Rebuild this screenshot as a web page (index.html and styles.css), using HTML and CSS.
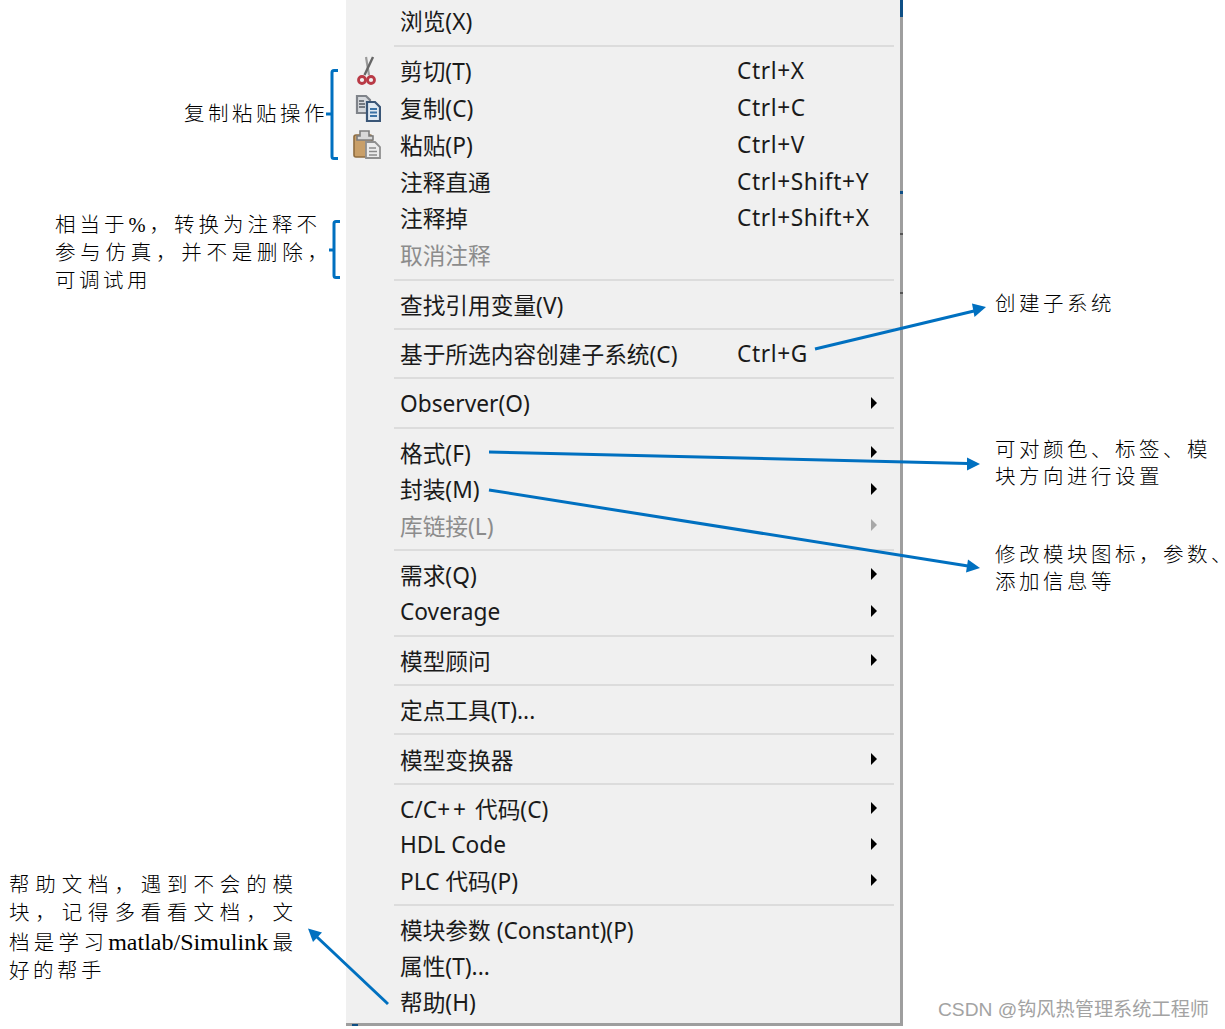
FILE: index.html
```html
<!DOCTYPE html>
<html lang="zh-CN">
<head>
<meta charset="utf-8">
<title>Simulink 右键菜单</title>
<link rel="stylesheet" href="styles.css">
</head>
<body>
<div class="page">
  <div class="menu">
    <div class="row tall"><span class="label">浏览(X)</span></div>
    <div class="sep"></div>
    <div class="row tall">
      <svg class="icon" viewBox="0 0 28 30"><path d="M13 1L16 19" stroke="#9a9a9a" stroke-width="2.200" fill="none"/><path d="M20 1L11.500 19" stroke="#666" stroke-width="2.400" fill="none"/><circle cx="9" cy="24" r="3.500" fill="none" stroke="#b93a46" stroke-width="2.800"/><circle cx="18" cy="24" r="3.500" fill="none" stroke="#b93a46" stroke-width="2.800"/></svg>
      <span class="label">剪切(T)</span><span class="key">Ctrl+X</span>
    </div>
    <div class="row tall">
      <svg class="icon" viewBox="0 0 28 30"><path d="M4 4h9l4 4v13H4z" fill="#d6d9dd" stroke="#7f8389" stroke-width="2.200"/><path d="M6 9h5M6 12h6M6 15h6" stroke="#555b63" stroke-width="1.600"/><path d="M14 10h8l5 5v14H14z" fill="#dfe9f2" stroke="#3a5677" stroke-width="2.200"/><path d="M17 17h7M17 20.500h7M17 24h7" stroke="#3a72a6" stroke-width="1.800"/></svg>
      <span class="label">复制(C)</span><span class="key">Ctrl+C</span>
    </div>
    <div class="row tall">
      <svg class="icon" viewBox="0 0 28 30"><rect x="1" y="6" width="18" height="22" rx="2" fill="#c99f68" stroke="#8f6c3f" stroke-width="1.600"/><path d="M7 7V2h9v5h4v4H4V7z" fill="#d8d8d8" stroke="#7d7d7d" stroke-width="1.600"/><path d="M13 13h9l5 5v11H13z" fill="#ececec" stroke="#8f8f8f" stroke-width="1.800"/><path d="M16 19h7M16 22.500h8M16 26h8" stroke="#8a8a8a" stroke-width="1.500"/></svg>
      <span class="label">粘贴(P)</span><span class="key">Ctrl+V</span>
    </div>
    <div class="row tall"><span class="label">注释直通</span><span class="key">Ctrl+Shift+Y</span></div>
    <div class="row tall"><span class="label">注释掉</span><span class="key">Ctrl+Shift+X</span></div>
    <div class="row tall off"><span class="label">取消注释</span></div>
    <div class="sep"></div>
    <div class="row"><span class="label">查找引用变量(V)</span></div>
    <div class="sep"></div>
    <div class="row"><span class="label">基于所选内容创建子系统(C)</span><span class="key">Ctrl+G</span></div>
    <div class="sep"></div>
    <div class="row sub"><span class="label">Observer(O)</span></div>
    <div class="sep"></div>
    <div class="row sub"><span class="label">格式(F)</span></div>
    <div class="row sub"><span class="label">封装(M)</span></div>
    <div class="row sub off"><span class="label">库链接(L)</span></div>
    <div class="sep"></div>
    <div class="row sub"><span class="label">需求(Q)</span></div>
    <div class="row sub"><span class="label">Coverage</span></div>
    <div class="sep"></div>
    <div class="row sub"><span class="label">模型顾问</span></div>
    <div class="sep"></div>
    <div class="row"><span class="label">定点工具(T)...</span></div>
    <div class="sep"></div>
    <div class="row sub"><span class="label">模型变换器</span></div>
    <div class="sep"></div>
    <div class="row low sub"><span class="label">C/C<span class="wide">++</span> 代码(C)</span></div>
    <div class="row low sub"><span class="label">HDL Code</span></div>
    <div class="row low sub"><span class="label">PLC 代码(P)</span></div>
    <div class="sep"></div>
    <div class="row low"><span class="label">模块参数 (Constant)(P)</span></div>
    <div class="row low"><span class="label">属性(T)...</span></div>
    <div class="row low"><span class="label">帮助(H)</span></div>
  </div>

  <svg class="overlay" viewBox="0 0 1225 1029">
    <g class="edge">
      <rect class="blue" x="900" y="0" width="3" height="17"/>
      <rect class="blue" x="900" y="191" width="3" height="3"/>
      <rect class="grey" x="900" y="233" width="3" height="2"/>
      <rect class="grey" x="900" y="292" width="3" height="2"/>
      <rect class="blue" x="352" y="1024" width="6" height="2"/>
    </g>
    <g class="brace">
      <path d="M338 70.500H334Q332 70.500 332 72.500V156.500Q332 158.500 334 158.500H338M332 114H326"/>
      <path d="M340 221.500H336Q334 221.500 334 223.500V275.500Q334 277.500 336 277.500H340M334 250H329"/>
    </g>
    <g class="arrow">
      <path d="M815 349L974 311"/><path class="head" d="M986 307L972 303.500L974.500 317z"/>
      <path d="M489 452L968 463.500"/><path class="head" d="M980 464L967 457.500V470.500z"/>
      <path d="M489 490L968 566"/><path class="head" d="M980 568L968 559.500L966 572.500z"/>
      <path d="M388 1004L317 937"/><path class="head" d="M308 928.500L313 942L322 932.500z"/>
    </g>
  </svg>

  <p class="note n1">复制粘贴操作</p>
  <p class="note n2"><span class="line w1">相当于%，转换为注释不</span><span class="line w2">参与仿真，并不是删除，</span>可调试用</p>
  <p class="note n3">创建子系统</p>
  <p class="note n4">可对颜色、标签、模<br>块方向进行设置</p>
  <p class="note n5">修改模块图标，参数<span class="tail">、</span><br>添加信息等</p>
  <p class="note n6"><span class="line w3">帮助文档，遇到不会的模</span><span class="line w3">块，记得多看看文档，文</span><span class="line w3">档是学习<span class="latin">matlab/Simulink</span>最</span>好的帮手</p>
  <p class="mark">CSDN @钩风热管理系统工程师</p>
</div>
</body>
</html>
```
FILE: styles.css
```css
* { box-sizing: border-box; }
html, body { margin: 0; background: #fff; }
.page { position: relative; width: 1225px; height: 1029px; overflow: hidden; padding-left: 346px; }
.menu {
  width: 557px; height: 1026px; padding-top: 2.500px;
  background: #f0f0f0;
  border-right: 3px solid #9e9e9e; border-bottom: 3px solid #9e9e9e;
  display: flex; flex-direction: column;
  font-family: "Noto Sans", "Noto Sans CJK SC", sans-serif;
  font-size: 22.700px; color: #1a1a1a;
}
.row { position: relative; height: 36.400px; flex: none; display: flex; align-items: center; padding-left: 54px; }
.row.tall { height: 36.800px; }
.row.low { height: 36px; }
.label { width: 337px; flex: none; white-space: nowrap; }
.key { white-space: nowrap; letter-spacing: 0.600px; }
.wide { letter-spacing: 3px; }
.off { color: #8c8c8c; }
.icon { position: absolute; left: 7px; top: 50%; transform: translateY(-50%); width: 28px; height: 30px; }
.sub::after {
  content: ""; position: absolute; left: 525px; top: 12px;
  border-left: 6px solid #000; border-top: 6px solid transparent; border-bottom: 6px solid transparent;
}
.sub.off::after { border-left-color: #a8a8a8; }
.sep { height: 2px; flex: none; margin: 5.500px 6px 5.500px 48px; background: #dcdcdc; }
.overlay { position: absolute; left: 0; top: 0; width: 1225px; height: 1029px; pointer-events: none; }
.edge .blue { fill: #0f4f85; }
.edge .grey { fill: #555; }
.brace path { fill: none; stroke: #0070c0; stroke-width: 3; }
.arrow path { fill: none; stroke: #0070c0; stroke-width: 3; }
.arrow path.head { fill: #0070c0; stroke: none; }
.note {
  position: absolute; margin: 0; white-space: nowrap;
  font-family: "Liberation Serif", "Noto Sans CJK SC", serif;
  font-size: 20.500px; line-height: 28px; color: #000; letter-spacing: 3.500px; font-weight: 300;
}
.line { display: block; text-align: justify; text-align-last: justify; letter-spacing: 0; }
.w1 { width: 262px; }
.w2 { width: 273px; }
.w3 { width: 284px; }
.tail { font-feature-settings: "halt"; letter-spacing: 0; }
.n1 { left: 184px; top: 100px; }
.n2 { left: 55px; top: 211px; }
.n3 { left: 995px; top: 290px; }
.n4 { left: 995px; top: 436.500px; line-height: 27.500px; }
.n5 { left: 995px; top: 541.500px; line-height: 27.500px; }
.n6 { left: 9px; top: 871px; line-height: 28.400px; }
.latin { letter-spacing: 0; font-size: 24px; font-weight: 400; }
.mark {
  position: absolute; left: 938px; top: 996px; margin: 0; white-space: nowrap;
  font-family: "Liberation Sans", "Noto Sans CJK SC", sans-serif;
  font-size: 19.200px; line-height: 28px; color: #a3a3a3;
}
```
